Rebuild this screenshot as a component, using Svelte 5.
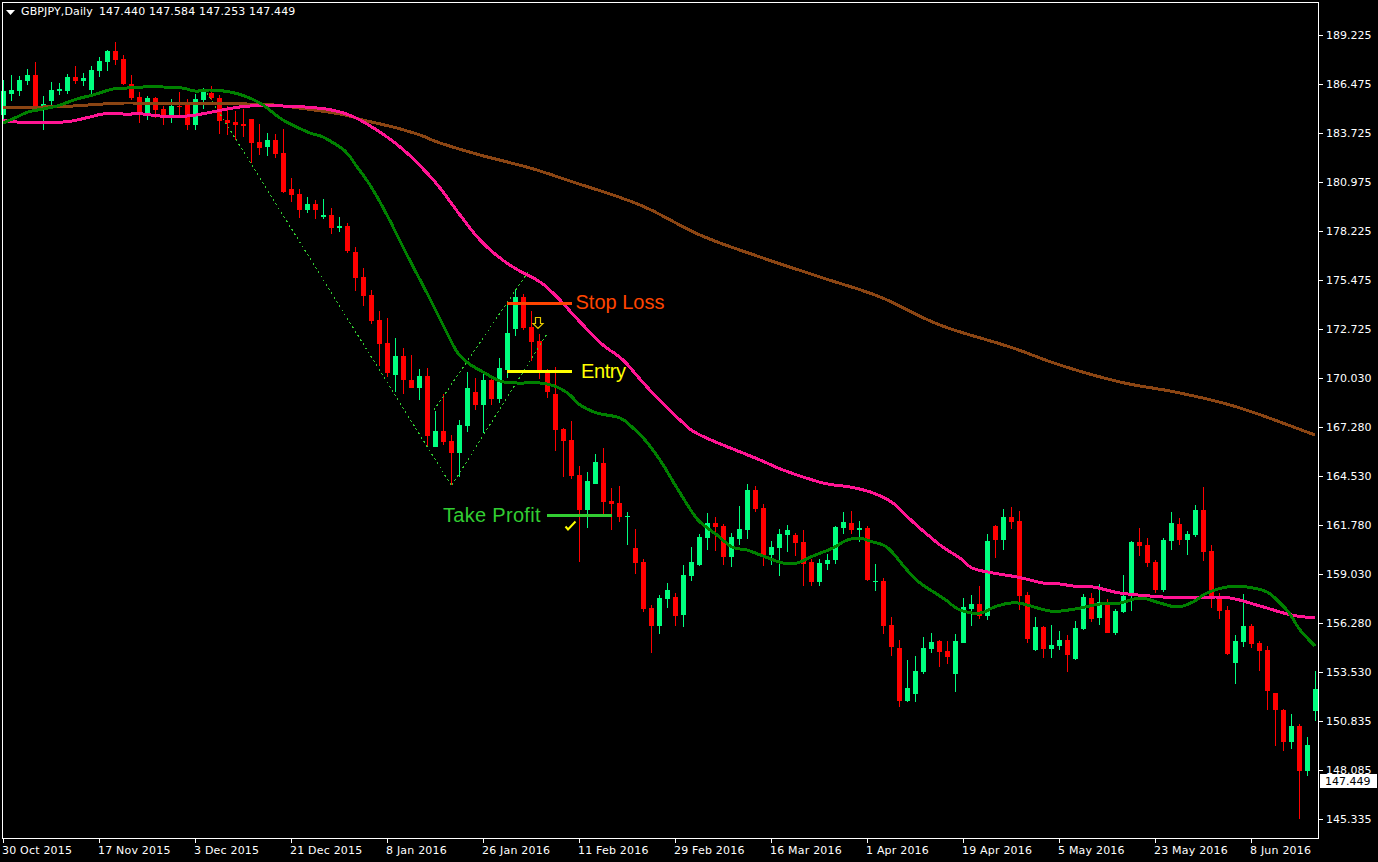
<script>
  // [isBull, wickTop, bodyTop, bodyBottom, wickBottom], one per trading day, in chart pixels
  const G = 1, R = 0;
  const candles = [
    [G,80,91,115,120],[G,75,90,94,101],[G,76,80,91,96],[G,69,75,81,85],[R,62,75,107,110],
    [G,96,104,107,130],[G,82,90,101,105],[G,83,89,91,95],[G,74,77,91,94],[R,66,77,81,84],
    [G,73,78,81,86],[G,66,70,90,94],[G,57,61,71,77],[G,50,51,62,71],[R,42,51,60,65],
    [R,55,59,84,85],[R,75,84,98,100],[R,92,97,112,123],[G,96,98,113,120],[R,97,98,110,118],
    [R,106,109,115,125],[G,99,106,115,123],[R,92,106,107,115],[R,99,105,125,130],[G,94,99,125,130],
    [G,88,92,100,109],[R,86,93,98,100],[R,95,98,121,134],[R,106,120,123,135],[R,111,122,125,140],
    [R,109,124,126,137],[R,119,119,143,163],[R,124,142,148,155],[G,133,140,147,156],[R,134,140,154,158],
    [R,129,153,192,193],[R,178,189,195,202],[R,189,194,210,218],[G,197,204,210,213],[R,200,204,210,219],
    [G,199,215,217,219],[R,208,215,228,234],[G,217,226,228,232],[R,223,226,251,253],[R,247,252,278,291],
    [R,268,277,296,306],[R,290,295,321,324],[R,311,320,344,366],[R,318,343,373,377],[G,338,356,375,392],
    [R,348,356,380,394],[R,355,380,388,388],[G,369,376,388,400],[R,368,376,436,446],[G,411,431,447,447],
    [R,394,431,442,445],[R,435,441,453,485],[G,420,425,453,477],[G,372,388,426,432],[R,378,392,405,410],
    [G,374,380,405,433],[R,378,380,399,405],[G,358,368,399,403],[G,303,333,370,378],[G,289,297,329,336],
    [R,294,297,328,330],[R,311,327,342,361],[R,334,341,370,379],[R,369,373,392,398],[R,367,394,430,451],
    [R,428,429,441,477],[R,421,440,476,479],[R,466,475,510,562],[G,472,481,510,528],[G,454,462,484,484],
    [R,448,463,502,517],[R,488,501,504,530],[R,486,503,517,522],[G,512,516,517,545],[R,529,548,563,574],
    [R,559,562,609,612],[R,605,608,626,653],[G,595,598,626,634],[G,583,590,599,608],[R,593,597,616,626],
    [G,565,575,615,627],[G,547,562,576,581],[G,534,537,565,566],[G,513,523,538,550],[R,517,523,527,551],
    [R,524,526,557,565],[G,533,537,557,567],[G,506,529,539,545],[G,484,490,530,539],[R,486,490,509,512],
    [R,504,508,555,566],[G,541,547,555,565],[G,529,534,548,576],[G,525,530,535,552],[R,533,535,543,556],
    [R,530,542,564,586],[R,559,562,582,586],[G,559,563,582,586],[G,554,560,564,570],[G,526,527,560,564],
    [G,512,522,528,534],[R,511,523,530,534],[G,521,528,530,542],[R,526,528,580,581],[G,564,581,582,591],
    [R,578,581,626,634],[R,617,625,647,656],[R,640,648,701,707],[G,660,688,701,702],[G,656,671,694,702],
    [G,637,648,672,674],[G,633,642,649,653],[R,640,641,652,667],[R,641,651,657,664],[G,634,641,674,692],
    [G,598,607,643,643],[G,595,604,609,626],[R,586,604,616,619],[G,534,541,616,620],[R,525,526,540,558],
    [G,509,517,540,550],[R,507,517,522,529],[R,511,521,596,610],[R,592,595,639,643],[G,617,627,650,651],
    [R,626,627,649,658],[G,625,645,649,658],[G,631,640,646,650],[R,635,640,655,672],[G,621,628,659,660],
    [G,594,597,629,630],[R,593,598,619,622],[G,584,602,618,625],[R,599,602,633,633],[G,609,611,633,635],
    [G,575,596,612,613],[G,541,542,594,611],[R,528,542,546,556],[R,538,545,563,567],[R,560,562,590,593],
    [G,538,540,590,592],[G,512,523,541,550],[R,518,524,540,545],[G,531,534,540,555],[G,505,510,535,537],
    [R,487,510,552,561],[R,545,551,596,608],[R,593,596,611,619],[R,606,610,654,655],[G,635,641,663,684],
    [G,594,626,642,647],[R,624,626,644,648],[R,641,643,651,671],[R,646,650,691,710],[R,693,693,710,746],
    [R,709,710,742,751],[G,714,726,742,749],[R,724,726,771,819],[G,737,745,771,776],[G,671,689,711,721]
  ];
  const bars = candles.map((c, i) => ({
    x: 3 + 8 * i,
    bull: c[0] === G,
    wickTop: c[1],
    bodyTop: c[2],
    bodyBottom: c[3],
    wickBottom: c[4]
  }));

  // Catmull-Rom through the read-off points, sampled finely so the moving averages curve.
  function smooth(source) {
    const p = source.trim().split(" ").map((s) => s.split(",").map(Number));
    const out = [];
    for (let i = 0; i < p.length - 1; i++) {
      const a = p[Math.max(i - 1, 0)], b = p[i], c = p[i + 1], d = p[Math.min(i + 2, p.length - 1)];
      const steps = Math.max(2, Math.round((c[0] - b[0]) / 4));
      for (let s = 0; s < steps; s++) {
        const t = s / steps, t2 = t * t, t3 = t2 * t;
        const f = (k) => 0.5 * (2 * b[k] + (c[k] - a[k]) * t + (2 * a[k] - 5 * b[k] + 4 * c[k] - d[k]) * t2 + (3 * b[k] - a[k] - 3 * c[k] + d[k]) * t3);
        out.push(f(0).toFixed(1) + "," + f(1).toFixed(1));
      }
    }
    const last = p[p.length - 1];
    out.push(last[0] + "," + last[1]);
    return out.join(" ");
  }

  const brown = smooth("3,107 43,107 73,106 103,104 133,103 247,104 283,106 340,114 363,120 393,127 420,135 440,143 480,155 530,168 570,181 640,205 700,235 760,257 820,277 880,297 940,325 1010,347 1060,365 1120,382 1180,393 1240,408 1315,435");
  const pink = smooth("3,120 17,122 63,122 90,117 103,114 127,114 143,114 160,116 187,116 207,113 227,109 250,106 283,106 317,108 340,112 360,120 387,137 407,153 427,173 440,188 460,215 480,240 500,258 518,270 540,282 557,297 580,322 603,345 623,360 647,387 680,420 700,435 760,460 783,470 823,483 850,487 873,493 893,503 913,522 940,545 960,558 972,568 993,573 1017,577 1043,583 1060,584 1073,586 1093,587 1120,593 1150,596 1163,597 1200,597 1230,598 1260,606 1280,612 1297,616 1315,618");
  const green = smooth("3,123 17,117 28,112 43,109 57,106 77,99 93,95 113,89 127,88 143,87 163,87 182,88 195,91 210,90 230,92 247,97 263,105 283,120 310,133 323,137 345,151 357,167 370,185 387,215 407,255 428,295 448,335 457,352 468,363 483,372 500,381 517,383 540,383 557,387 570,395 580,405 597,413 620,418 633,428 645,440 660,460 677,488 692,512 700,522 717,535 732,547 747,550 763,556 783,563 797,563 813,556 833,548 845,541 858,538 873,542 888,548 907,570 920,583 943,598 960,610 980,613 997,606 1018,603 1050,611 1075,609 1100,604 1120,603 1140,598 1160,603 1177,607 1193,602 1207,593 1227,587 1247,587 1267,592 1280,603 1290,614 1300,630 1315,646");
  const channels = [
    [207, 93, 451, 485],
    [452, 485, 547, 334],
    [434, 410, 528, 272]
  ];

  const prices = ["189.225","186.475","183.725","180.975","178.225","175.475","172.725","170.030","167.280","164.530","161.780","159.030","156.280","153.530","150.835","148.085","145.335"];
  const dates = ["30 Oct 2015","17 Nov 2015","3 Dec 2015","21 Dec 2015","8 Jan 2016","26 Jan 2016","11 Feb 2016","29 Feb 2016","16 Mar 2016","1 Apr 2016","19 Apr 2016","5 May 2016","23 May 2016","8 Jun 2016"];
</script>

<div class="chart">
  <div class="plot">
    <svg class="canvas" width="1319" height="839" viewBox="0 0 1319 839">
      {#each bars as b}
        <g class={b.bull ? "bull" : "bear"}>
          <rect x={b.x} y={b.wickTop} width="1" height={b.wickBottom - b.wickTop} />
          <rect x={b.x - 2} y={b.bodyTop} width="5" height={b.bodyBottom - b.bodyTop} />
        </g>
      {/each}

      {#each channels as c}
        <line class="channel" x1={c[0]} y1={c[1]} x2={c[2]} y2={c[3]} />
      {/each}

      <polyline class="ma brown" points={brown} />
      <polyline class="ma pink" points={pink} />
      <polyline class="ma green" points={green} />

      <line class="level stop" x1="507" x2="572" y1="303" y2="303" />
      <line class="level entry" x1="507" x2="572" y1="371" y2="371" />
      <line class="level target" x1="547" x2="612" y1="515" y2="515" />

      <text class="note stop-text" x="575.500" y="309">Stop Loss</text>
      <text class="note entry-text" x="581" y="378">Entry</text>
      <text class="note target-text" x="443" y="522">Take Profit</text>

      <path class="sell-arrow" d="M535.5 317.5h5v6h2.5l-5 5-5-5h2.500z" />
      <path class="tick-mark" d="M565.500 526.500l2.500 3 7.500-8" />

      <rect class="frame" x="2" y="2" width="1316" height="836" />
    </svg>
    <div class="legend">
      <svg class="caret" width="9" height="5" viewBox="0 0 9 5"><path d="M0 0h9L4.500 5z" /></svg>
      <span class="symbol">GBPJPY,Daily</span>
      <span>147.440 147.584 147.253 147.449</span>
    </div>
  </div>

  <svg class="price-axis" width="59" height="839" viewBox="0 0 59 839">
    {#each prices as p, i}
      <rect class="axis-tick" x="0" y={35 + 49 * i} width="4" height="1" />
      <text class="axis-text" x="7" y={39 + 49 * i}>{p}</text>
    {/each}
    <rect class="last-box" x="1" y="774" width="57" height="14" />
    <text class="last-text" x="6" y="785">147.449</text>
  </svg>

  <svg class="time-axis" width="1378" height="23" viewBox="0 0 1378 23">
    {#each dates as d, i}
      <rect class="axis-tick" x={3 + 96 * i} y="0" width="1" height="4" />
      <text class="date-text" x={2 + 96 * i} y="15">{d}</text>
    {/each}
  </svg>
</div>

<style>
  :global(body) {
    margin: 0;
    background: #000;
    overflow: hidden;
  }

  .chart {
    display: grid;
    grid-template-columns: 1319px 59px;
    grid-template-rows: 839px 23px;
    width: 1378px;
    height: 862px;
    background: #000;
    font-family: "DejaVu Sans", sans-serif;
    font-size: 11px;
  }

  .plot {
    position: relative;
  }

  svg {
    display: block;
  }

  .canvas rect,
  .ma,
  .level,
  .channel {
    shape-rendering: crispEdges;
  }

  .bull rect {
    fill: #00ff7f;
  }

  .bear rect {
    fill: #ff0000;
  }

  .channel {
    stroke: #32cd32;
    stroke-width: 1;
    stroke-dasharray: 2 3;
  }

  .ma {
    fill: none;
    stroke-width: 3;
    stroke-linejoin: round;
  }

  .brown {
    stroke: #8b4513;
  }

  .pink {
    stroke: #ff1493;
  }

  .green {
    stroke: #008000;
  }

  .level {
    stroke-width: 3;
  }

  .stop {
    stroke: #ff4500;
  }

  .entry {
    stroke: #ffff00;
  }

  .target {
    stroke: #32cd32;
  }

  .note {
    font-family: "Liberation Sans", Arial, sans-serif;
    font-size: 20px;
  }

  .stop-text {
    fill: #ff4500;
  }

  .entry-text {
    fill: #ffff00;
    letter-spacing: -0.4px;
  }

  .target-text {
    fill: #32cd32;
    letter-spacing: 0.3px;
  }

  .sell-arrow {
    fill: #000;
    fill-opacity: 0.1;
    stroke: #e6c800;
    stroke-width: 1.2;
  }

  .tick-mark {
    fill: none;
    stroke: #ffff00;
    stroke-width: 2;
  }

  .frame {
    fill: none;
    stroke: #fff;
    stroke-width: 1;
    transform: translate(0.5px, 0.5px);
  }

  .legend {
    position: absolute;
    top: 5px;
    left: 6px;
    display: flex;
    align-items: center;
    gap: 6px;
    color: #fff;
    line-height: 14px;
    white-space: nowrap;
    letter-spacing: 0.13px;
  }

  .caret {
    fill: #fff;
  }

  .axis-tick {
    fill: #fff;
    shape-rendering: crispEdges;
  }

  .axis-text {
    fill: #fff;
    font-size: 11px;
  }

  .date-text {
    fill: #fff;
    font-size: 11px;
    letter-spacing: 0.2px;
  }

  .last-box {
    fill: #fff;
    shape-rendering: crispEdges;
  }

  .last-text {
    fill: #000;
    font-size: 11px;
  }

  .time-axis {
    grid-column: 1 / span 2;
  }
</style>
